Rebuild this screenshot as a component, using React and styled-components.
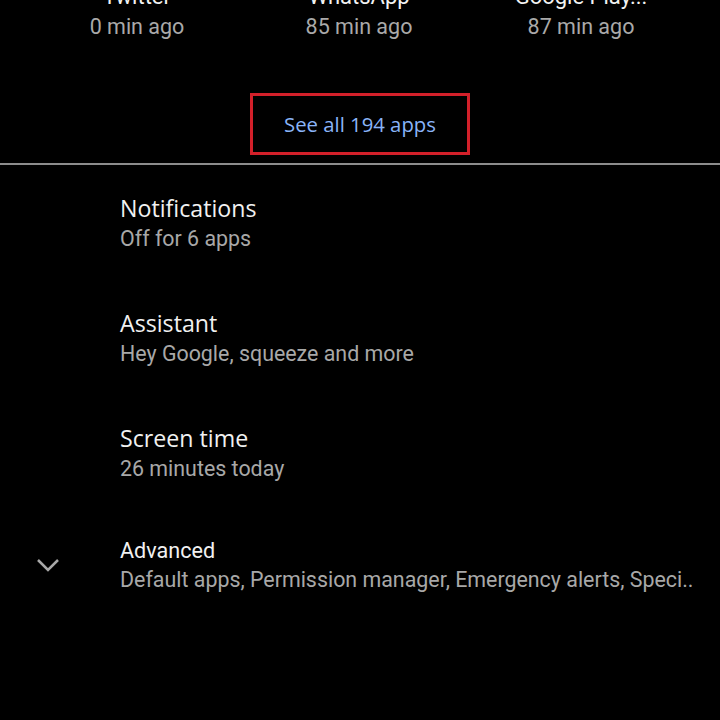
import React from 'react';
import styled, { createGlobalStyle } from 'styled-components';

const GlobalStyle = createGlobalStyle`
  html, body {
    margin: 0;
    padding: 0;
    background: #000;
  }
  body {
    font-family: Roboto, "Liberation Sans", sans-serif;
    overflow: hidden;
  }
`;

const Page = styled.div`
  width: 720px;
  height: 720px;
  background: #000;
  overflow: hidden;
`;

// apps recientes, cortados arriba
const RecentGrid = styled.div`
  display: grid;
  grid-template-columns: repeat(3, 1fr);
  padding: 0 28px 0 26px;
  margin-top: -17px;
`;

const RecentApp = styled.div`
  display: flex;
  flex-direction: column;
  align-items: center;
`;

const AppName = styled.div`
  font-size: 22px;
  line-height: 28px;
  color: #f2f2f2;
  white-space: nowrap;
`;

const AppTime = styled.div`
  margin-top: 3px;
  font-size: 21.5px;
  line-height: 26px;
  color: #a9a9a9;
`;

const ButtonRow = styled.div`
  display: flex;
  justify-content: center;
  padding: 53px 0 8px;
`;

const SeeAllButton = styled.div`
  width: 220px;
  height: 62px;
  box-sizing: border-box;
  border: 3px solid #d3202a;
  display: flex;
  align-items: center;
  justify-content: center;
  font-family: "Open Sans", Roboto, sans-serif;
  font-size: 20.3px;
  font-weight: 500;
  color: #8ab4f8;
`;

const Divider = styled.div`
  height: 2px;
  background: #8c8c8c;
`;

const Row = styled.div`
  display: flex;
  align-items: center;
  padding: ${p => (p.compact ? '26px 0 27px' : '28px 0 27px')};
`;

const IconCell = styled.div`
  width: 96px;
  margin-right: 24px;
  flex-shrink: 0;
  display: flex;
  justify-content: center;
  align-items: center;
  color: #a8a8a8;
`;

const TextBlock = styled.div`
  min-width: 0;
  flex: 1;
  padding-right: 20px;
`;

const Title = styled.div`
  font-family: ${p => (p.compact ? 'Roboto' : '"Open Sans"')}, sans-serif;
  font-size: ${p => (p.compact ? '21.6px' : '23.2px')};
  line-height: 30px;
  color: #f1f1f1;
`;

const Subtitle = styled.div`
  margin-top: ${p => (p.compact ? '0' : '2px')};
  font-size: 21.4px;
  line-height: 28px;
  color: #a8a8a8;
  white-space: nowrap;
  overflow: hidden;
`;

const Chevron = () => (
    <svg width="24" height="14" viewBox="0 0 24 14">
        <polyline points="2,2 12,12 22,2" fill="none" stroke="currentColor" strokeWidth="2.5" />
    </svg>
);

const recent = [
    { name: 'Twitter', time: '0 min ago' },
    { name: 'WhatsApp', time: '85 min ago' },
    { name: 'Google Play...', time: '87 min ago' },
];

const items = [
    { title: 'Notifications', subtitle: 'Off for 6 apps' },
    { title: 'Assistant', subtitle: 'Hey Google, squeeze and more' },
    { title: 'Screen time', subtitle: '26 minutes today' },
];

const App = () => {
    return (
        <Page>
            <GlobalStyle />
            <RecentGrid>
                {recent.map((app) => (
                    <RecentApp key={app.name}>
                        <AppName>{app.name}</AppName>
                        <AppTime>{app.time}</AppTime>
                    </RecentApp>
                ))}
            </RecentGrid>
            <ButtonRow>
                <SeeAllButton>See all 194 apps</SeeAllButton>
            </ButtonRow>
            <Divider />
            {items.map((item) => (
                <Row key={item.title}>
                    <IconCell />
                    <TextBlock>
                        <Title>{item.title}</Title>
                        <Subtitle>{item.subtitle}</Subtitle>
                    </TextBlock>
                </Row>
            ))}
            <Row compact>
                <IconCell>
                    <Chevron />
                </IconCell>
                <TextBlock>
                    <Title compact>Advanced</Title>
                    <Subtitle compact>Default apps, Permission manager, Emergency alerts, Speci..</Subtitle>
                </TextBlock>
            </Row>
        </Page>
    );
};

export default App;
